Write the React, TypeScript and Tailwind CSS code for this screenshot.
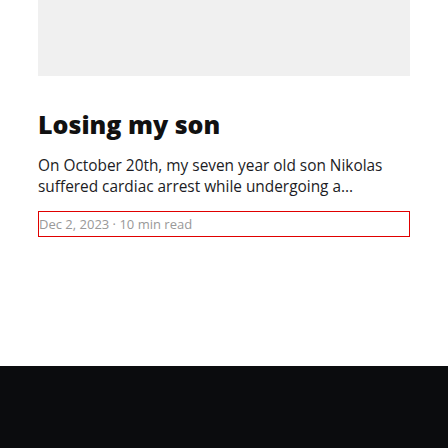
import React from "react";

export default function App() {
  return (
    <div
      className="min-h-[448px] flex flex-col bg-white"
      style={{ fontFamily: '"Open Sans", "Noto Sans", sans-serif' }}
    >
      <main className="w-[372px] mx-auto">
        <div className="h-[76px] bg-[#f0f0f0]" />
        <h2 className="mt-[32px] text-[25px] leading-[32px] font-extrabold text-[#111111]">
          Losing my son
        </h2>
        <p className="mt-[15px] text-[15.4px] leading-[21px] text-[#1c1c24]">
          On October 20th, my seven year old son Nikolas suffered cardiac arrest while undergoing a...
        </p>
        <div className="mt-[14px] border border-[#e00000] py-[2px] text-[13px] leading-[20px] text-[#999999]">
          Dec 2, 2023 · 10 min read
        </div>
      </main>
      <div className="flex-1" />
      <footer className="h-[82px] bg-[#0b0c0e]" />
    </div>
  );
}
